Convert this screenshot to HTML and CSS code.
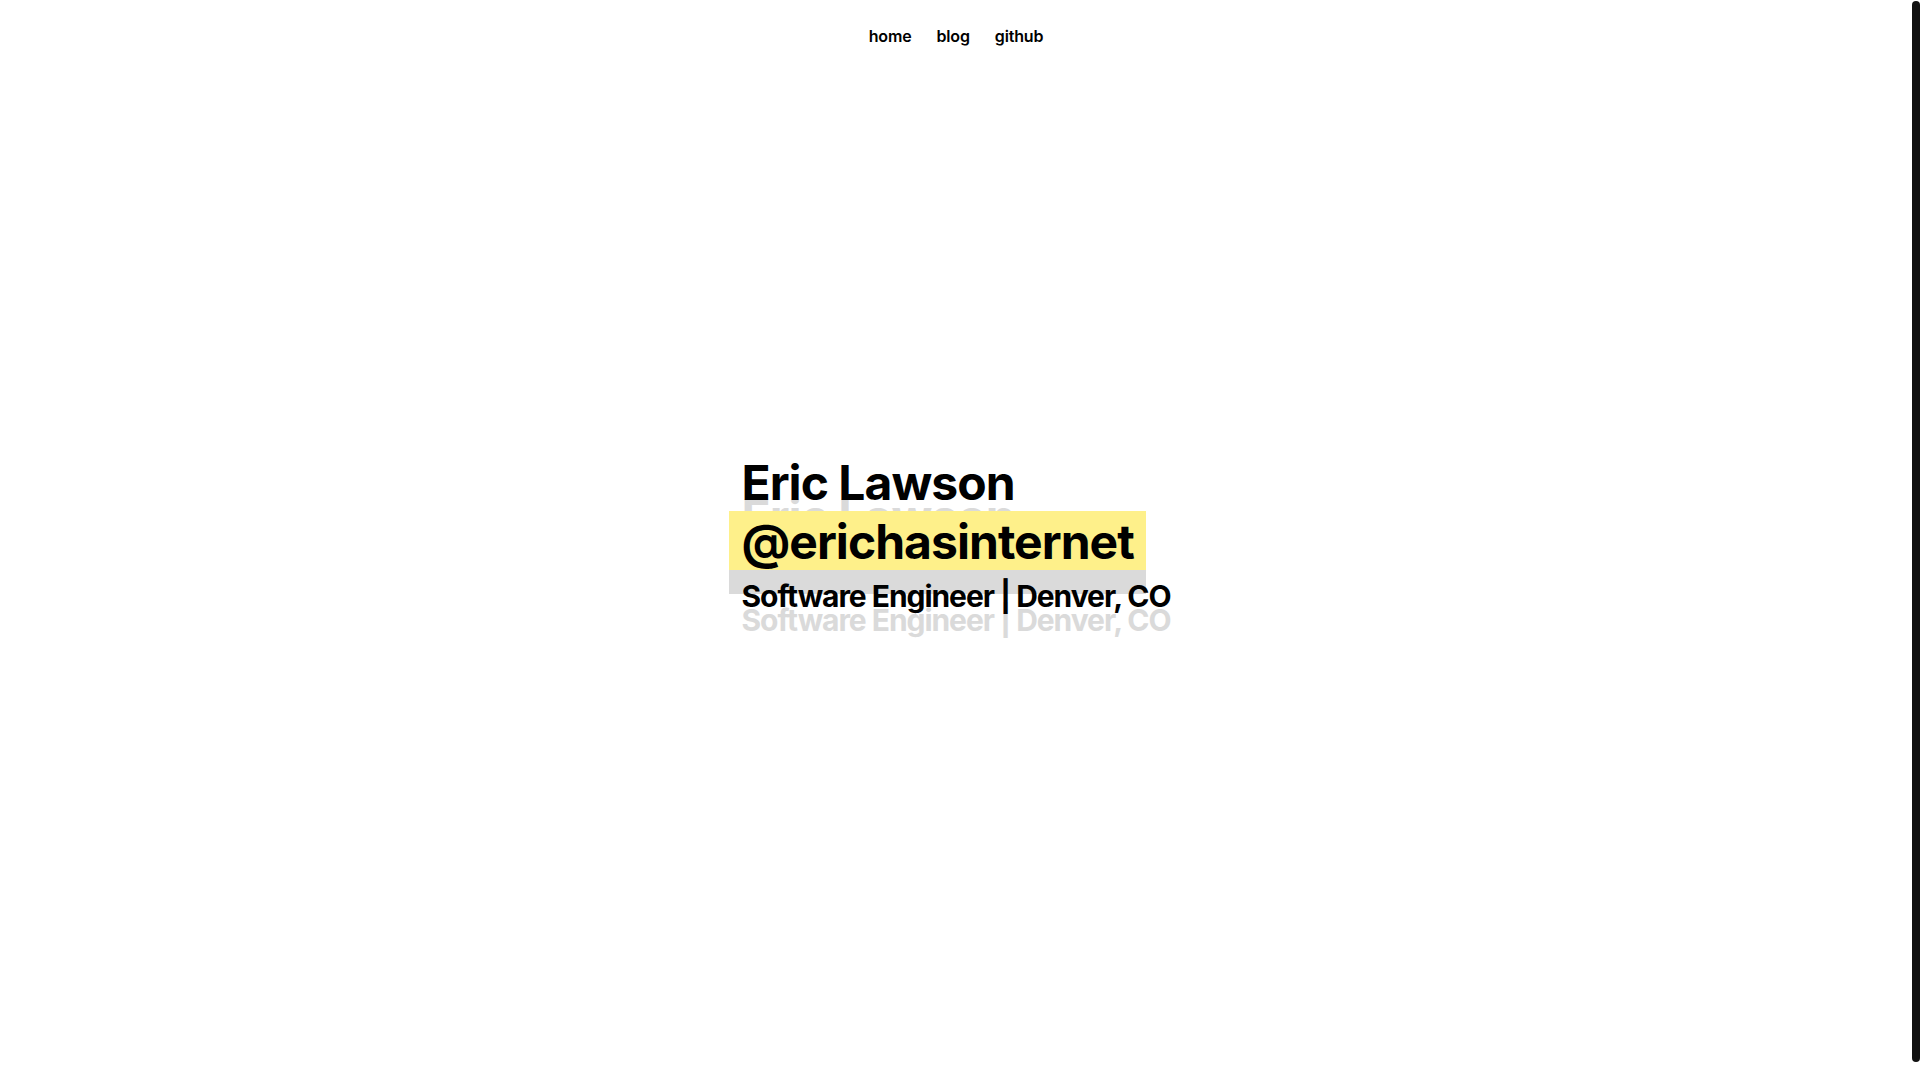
FILE: index.html
```html
<!DOCTYPE html>
<html lang="en">
<head>
<meta charset="utf-8">
<title>Eric Lawson</title>
<link rel="stylesheet" href="styles.css">
</head>
<body>
<div class="page">
  <nav class="nav">
    <a href="#" class="nav-link">home</a>
    <a href="#" class="nav-link">blog</a>
    <a href="#" class="nav-link">github</a>
  </nav>
  <main class="hero">
    <div class="intro">
      <h1 class="name">Eric Lawson</h1>
      <div class="handle">@erichasinternet</div>
      <p class="role">Software Engineer | Denver, CO</p>
    </div>
  </main>
</div>
<div class="scroll-thumb" aria-hidden="true"></div>
</body>
</html>
```

FILE: styles.css
```css
html {
  background: #fff;
}
body {
  margin: 8px 16px 8px 8px;
  font-family: Inter, "Noto Sans", sans-serif;
  color: #000;
}
.page {
  display: grid;
  min-height: 100vh;
}
.nav {
  grid-area: 1 / 1;
  align-self: start;
  justify-self: center;
  display: flex;
  gap: 25px;
  padding-top: 16px;
  position: relative;
  z-index: 1;
}
.nav-link {
  color: #000;
  text-decoration: none;
  font-size: 16px;
  line-height: 24px;
  font-weight: 600;
  letter-spacing: -0.01em;
}
.hero {
  grid-area: 1 / 1;
  display: flex;
  align-items: center;
  justify-content: center;
  height: 100vh;
}
.intro {
  display: flex;
  flex-direction: column;
  align-items: flex-start;
  padding-bottom: 28px;
}
.name {
  margin: 0;
  padding: 0 12px;
  font-size: 48px;
  line-height: 56px;
  font-weight: 700;
  letter-spacing: -0.02em;
  text-shadow: 0 34px #dadada;
}
.handle {
  position: relative;
  padding: 3px 12px 0;
  background: #fef08a;
  box-shadow: 0 24px #dadada;
  font-size: 48px;
  line-height: 56px;
  font-weight: 700;
  letter-spacing: -0.02em;
}
.role {
  position: relative;
  margin: 8px 0 0;
  padding: 0 12px;
  font-size: 30px;
  line-height: 36px;
  font-weight: 700;
  letter-spacing: -0.035em;
  text-shadow: 0 24px #dadada;
}
.scroll-thumb {
  position: fixed;
  top: 1px;
  right: 0;
  width: 8px;
  height: 1061px;
  background: #111;
  border-radius: 4px;
}
```
